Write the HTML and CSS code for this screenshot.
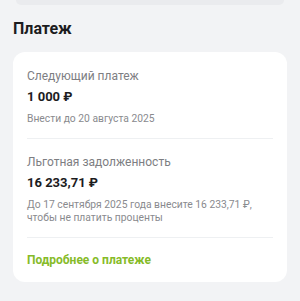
FILE: index.html
```html
<!DOCTYPE html>
<html lang="ru">
<head>
<meta charset="utf-8">
<link rel="stylesheet" href="styles.css">
</head>
<body>
<div class="top-card"></div>
<h2 class="title">Платеж</h2>
<div class="card">
  <div class="section first">
    <div class="label">Следующий платеж</div>
    <div class="value">1 000 ₽</div>
    <div class="note">Внести до 20 августа 2025</div>
  </div>
  <div class="divider"></div>
  <div class="section">
    <div class="label">Льготная задолженность</div>
    <div class="value">16 233,71 ₽</div>
    <div class="note">До 17 сентября 2025 года внесите 16 233,71 ₽,<br>чтобы не платить проценты</div>
  </div>
  <div class="divider"></div>
  <div class="link">Подробнее о платеже</div>
</div>
</body>
</html>
```
FILE: styles.css
```css
html, body {
  margin: 0;
  padding: 0;
  background: #f2f3f5;
  font-family: Roboto, "Noto Sans", sans-serif;
}
body {
  width: 300px;
  height: 301px;
  overflow: hidden;
}
.top-card {
  height: 5px;
  margin: 0 16px;
  background: #eaebee;
  border-radius: 0 0 12px 12px;
}
.title {
  margin: 14px 0 0 13px;
  font-size: 16px;
  line-height: 20px;
  font-weight: 700;
  color: #1c1c1e;
}
.card {
  margin: 13px 13px 0 13px;
  background: #ffffff;
  border-radius: 12px;
  padding: 16px 14px 14px;
}
.section {
  padding-bottom: 12px;
}
.divider + .section {
  padding-top: 15px;
}
.label {
  font-size: 12px;
  line-height: 16px;
  color: #7d7e82;
}
.value {
  margin-top: 4px;
  font-size: 13px;
  line-height: 18px;
  font-weight: 700;
  color: #1c1c1e;
}
.note {
  margin-top: 6px;
  font-size: 10.3px;
  line-height: 13.5px;
  color: #898a8e;
}
.divider {
  height: 1px;
  background: #eef0f2;
}
.link {
  margin-top: 14px;
  font-size: 12px;
  line-height: 16px;
  font-weight: 700;
  color: #86bb28;
}
```
